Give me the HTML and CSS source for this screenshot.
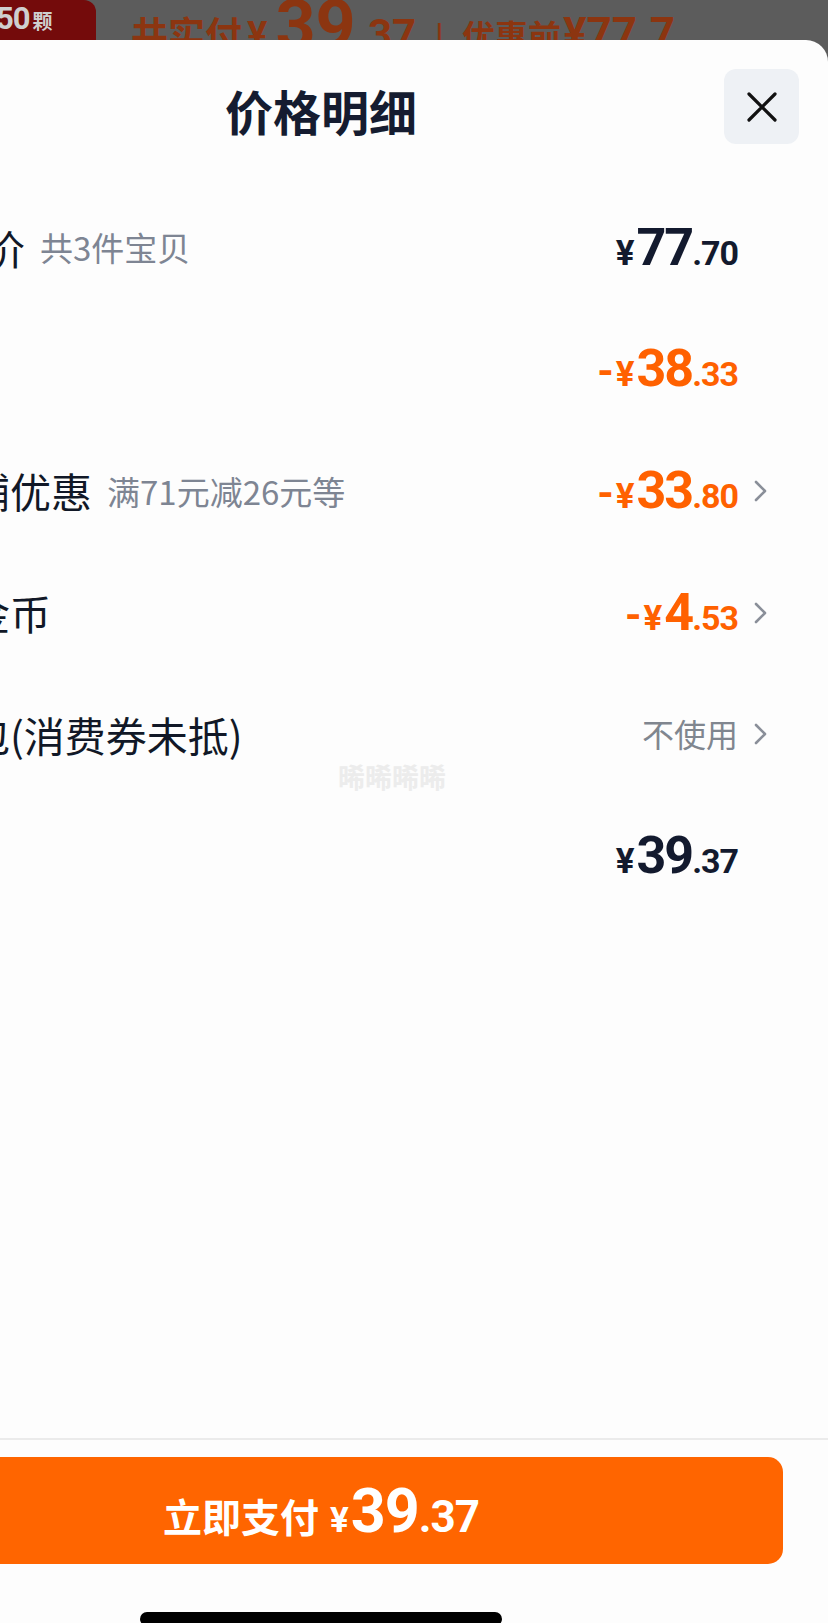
FILE: index.html
```html
<!DOCTYPE html>
<html lang="zh-CN">
<head>
<meta charset="utf-8">
<title>价格明细</title>
<link rel="stylesheet" href="styles.css">
</head>
<body>
<div class="page">
  <div class="topbar">
    <div class="tag"><span class="tag-num">50</span><span class="tag-unit">颗</span></div>
    <div class="summary">
      <span class="s-cn">共实付</span><span class="s-yen">¥</span><span class="s-big">39</span><span class="s-sm">.37</span><span class="s-sep">|</span><span class="s-cn2">优惠前</span><span class="s-sm2">¥77.7</span>
    </div>
  </div>

  <div class="sheet">
    <header class="head">
      <div></div>
      <h1 class="title">价格明细</h1>
      <button class="close" aria-label="关闭">
        <svg width="30" height="30" viewBox="0 0 30 30"><path d="M2 2L28 28M28 2L2 28" stroke="#111" stroke-width="3.2" stroke-linecap="round" fill="none"/></svg>
      </button>
    </header>

    <main class="rows">
      <div class="row">
        <div class="left"><span class="label first">总价</span><span class="sub">共3件宝贝</span></div>
        <div class="amount"><span class="yen">¥</span><span class="int">77</span><span class="dec">.70</span></div>
        <span class="chev"></span>
      </div>
      <div class="row">
        <div class="left"></div>
        <div class="amount neg"><span class="minus">-</span><span class="yen">¥</span><span class="int">38</span><span class="dec">.33</span></div>
        <span class="chev"></span>
      </div>
      <div class="row">
        <div class="left"><span class="label">店铺优惠</span><span class="sub">满71元减26元等</span></div>
        <div class="amount neg"><span class="minus">-</span><span class="yen">¥</span><span class="int">33</span><span class="dec">.80</span></div>
        <span class="chev"><svg width="13" height="22" viewBox="0 0 13 22"><path d="M2 2L11 11L2 20" stroke="#8a8f99" stroke-width="2.6" fill="none" stroke-linecap="round" stroke-linejoin="round"/></svg></span>
      </div>
      <div class="row">
        <div class="left"><span class="label">淘金币</span></div>
        <div class="amount neg"><span class="minus">-</span><span class="yen">¥</span><span class="int">4</span><span class="dec">.53</span></div>
        <span class="chev"><svg width="13" height="22" viewBox="0 0 13 22"><path d="M2 2L11 11L2 20" stroke="#8a8f99" stroke-width="2.6" fill="none" stroke-linecap="round" stroke-linejoin="round"/></svg></span>
      </div>
      <div class="row">
        <div class="left"><span class="label">红包(消费券未抵)</span></div>
        <div class="muted">不使用</div>
        <span class="chev"><svg width="13" height="22" viewBox="0 0 13 22"><path d="M2 2L11 11L2 20" stroke="#8a8f99" stroke-width="2.6" fill="none" stroke-linecap="round" stroke-linejoin="round"/></svg></span>
      </div>
      <div class="row">
        <div class="left"></div>
        <div class="amount"><span class="yen">¥</span><span class="int">39</span><span class="dec">.37</span></div>
        <span class="chev"></span>
      </div>
    </main>

    <footer class="foot">
      <button class="pay"><span class="pay-cn">立即支付</span><span class="pay-yen">¥</span><span class="pay-big">39</span><span class="pay-sm">.37</span></button>
      <div class="home-bar"></div>
    </footer>

    <div class="watermark">晞晞晞晞</div>
  </div>
</div>
</body>
</html>
```

FILE: styles.css
```css
* { box-sizing: border-box; margin: 0; padding: 0; }

html, body {
  width: 828px;
  height: 1623px;
  overflow: hidden;
}

body {
  background: #5c5c5c;
  font-family: "Noto Sans CJK SC", "Noto Sans", sans-serif;
}

.page {
  width: 828px;
  height: 1623px;
  overflow: hidden;
  display: flex;
  flex-direction: column;
}

/* dimmed page behind the sheet */
.topbar {
  height: 40px;
  flex: none;
  display: flex;
  overflow: hidden;
}

.tag {
  width: 96px;
  height: 52px;
  flex: none;
  background: #740b0b;
  border-radius: 0 12px 12px 0;
  display: flex;
  align-items: baseline;
  padding-top: 3px;
  color: #cfcfcf;
  font-weight: 700;
  line-height: 1;
}

.tag-num {
  font-family: Roboto, "Liberation Sans", sans-serif;
  font-size: 31px;
  margin-left: -4px;
  letter-spacing: -1px;
}

.tag-unit {
  font-size: 20px;
  margin-left: 3px;
}

.summary {
  display: flex;
  align-items: baseline;
  margin-left: 35px;
  margin-top: -10px;
  color: #8c3510;
  font-weight: 700;
  line-height: 1;
  white-space: nowrap;
}

.s-cn { font-size: 37px; }

.s-yen {
  font-family: Roboto, sans-serif;
  font-size: 38px;
  margin-left: 5px;
}

.s-big {
  font-family: Roboto, sans-serif;
  font-size: 70px;
  margin-left: 8px;
}

.s-sm {
  font-family: Roboto, sans-serif;
  font-size: 42px;
  margin-left: 0;
}

.s-sep {
  font-family: Roboto, sans-serif;
  font-size: 36px;
  font-weight: 400;
  margin: 0 18px 0 19px;
}

.s-cn2 { font-size: 33px; }

.s-sm2 {
  font-family: Roboto, sans-serif;
  font-size: 44px;
  margin-left: 2px;
}

/* sheet */
.sheet {
  flex: none;
  position: relative;
  width: 1014px;
  height: 1586px;
  margin-left: -186px;
  background: #fdfdfd;
  border-radius: 22px 22px 0 0;
  display: flex;
  flex-direction: column;
}

.head {
  height: 147px;
  flex: none;
  display: grid;
  grid-template-columns: 1fr auto 1fr;
  align-items: start;
  padding: 29px 29px 0;
}

.title {
  margin-top: 13px;
  font-size: 48px;
  line-height: 56px;
  font-weight: 700;
  color: #151c30;
}

.close {
  justify-self: end;
  width: 75px;
  height: 75px;
  border: none;
  border-radius: 12px;
  background: #eef1f5;
  display: flex;
  align-items: center;
  justify-content: center;
}

.rows {
  flex: 1;
  display: flex;
  flex-direction: column;
  padding: 0 61px 0 114px;
}

.row {
  height: 121.6px;
  flex: none;
  display: flex;
  align-items: center;
}

.left {
  flex: 1;
  display: flex;
  align-items: center;
  white-space: nowrap;
}

.label {
  font-size: 41px;
  line-height: 1.3;
  color: #111827;
}

.label.first { margin-left: 15px; }

.sub {
  font-size: 33px;
  line-height: 1.3;
  color: #7e8593;
  margin-left: 15px;
}

.amount {
  display: flex;
  align-items: baseline;
  font-family: Roboto, "Liberation Sans", sans-serif;
  font-weight: 700;
  color: #131a2e;
  line-height: 1;
  white-space: nowrap;
}

.amount.neg { color: #ff6100; }

.minus {
  font-size: 42px;
  margin-right: 2px;
}

.yen {
  font-size: 35px;
  margin-right: 2px;
}

.int {
  font-size: 52px;
  letter-spacing: -2px;
}

.dec {
  font-size: 34px;
  letter-spacing: -1px;
}

.muted {
  font-size: 32px;
  line-height: 1.3;
  color: #80868f;
}

.chev {
  width: 13px;
  height: 22px;
  margin-left: 16px;
  flex: none;
  display: flex;
}

.foot {
  flex: none;
  border-top: 2px solid #ebebeb;
  padding: 17px 45px 0;
}

.pay {
  width: 100%;
  height: 107px;
  border: none;
  border-radius: 15px;
  background: #ff6500;
  color: #ffffff;
  display: flex;
  align-items: baseline;
  justify-content: center;
  padding-top: 24px;
  font-weight: 700;
  line-height: 1;
}

.pay-cn {
  font-family: "Noto Sans CJK SC", sans-serif;
  font-size: 39px;
}

.pay-yen {
  font-family: Roboto, sans-serif;
  font-size: 35px;
  margin-left: 11px;
  margin-right: 2px;
}

.pay-big {
  font-family: Roboto, sans-serif;
  font-size: 61px;
  letter-spacing: -1px;
}

.pay-sm {
  font-family: Roboto, sans-serif;
  font-size: 44px;
  letter-spacing: -1px;
}

.home-bar {
  width: 362px;
  height: 14px;
  margin: 48px auto 0;
  border-radius: 7px;
  background: #000000;
}

.watermark {
  position: absolute;
  left: 524px;
  top: 717px;
  font-size: 27px;
  font-weight: 700;
  color: #ececec;
}
```
